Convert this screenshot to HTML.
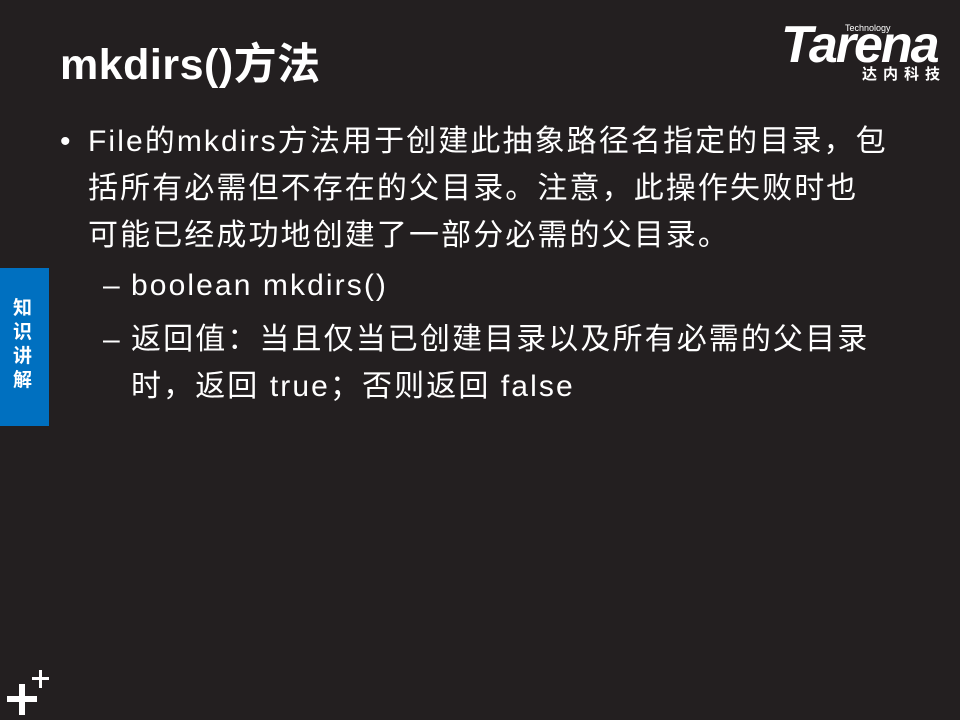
<!DOCTYPE html>
<html><head><meta charset="utf-8"><style>
body{margin:0;width:960px;height:720px;background:#231f20;position:relative;overflow:hidden;font-family:"Liberation Sans","Noto Sans CJK SC",sans-serif;color:#fff}
.t{position:absolute;white-space:nowrap}
.b{font-size:30px;line-height:47px;letter-spacing:2.1px}
</style></head><body>
<div class="t" style="left:60px;top:39px;font-size:43px;font-weight:bold;line-height:52px;letter-spacing:0.5px">mkdirs()方法</div>
<div class="t" style="left:781px;top:17px;font-size:52px;font-weight:bold;font-style:italic;letter-spacing:-2px;line-height:56px">Tarena</div>
<div class="t" style="left:845px;top:23px;font-size:9px;line-height:10px">Technology</div>
<div class="t" style="left:862px;top:66px;font-size:15px;font-weight:bold;letter-spacing:6px;line-height:18px">达内科技</div>
<div style="position:absolute;left:0;top:268px;width:49px;height:158px;background:#0070c0"></div>
<div class="t" style="left:13px;top:297px;font-size:19px;font-weight:bold;line-height:24px;width:24px;white-space:normal">知识讲解</div>
<div class="t b" style="left:60px;top:118px">•</div>
<div class="t b" style="left:88px;top:118px">File的mkdirs方法用于创建此抽象路径名指定的目录，包<br>括所有必需但不存在的父目录。注意，此操作失败时也<br>可能已经成功地创建了一部分必需的父目录。</div>
<div class="t b" style="left:103px;top:262px">–</div>
<div class="t b" style="left:131px;top:262px">boolean mkdirs()</div>
<div class="t b" style="left:103px;top:316px">–</div>
<div class="t b" style="left:131px;top:316px">返回值：当且仅当已创建目录以及所有必需的父目录<br>时，返回 true；否则返回 false</div>
<div style="position:absolute;left:7px;top:696px;width:30px;height:6px;background:#fff"></div>
<div style="position:absolute;left:19px;top:684px;width:6px;height:31px;background:#fff"></div>
<div style="position:absolute;left:32px;top:677px;width:17px;height:3px;background:#fff"></div>
<div style="position:absolute;left:39px;top:670px;width:3px;height:18px;background:#fff"></div>
</body></html>
